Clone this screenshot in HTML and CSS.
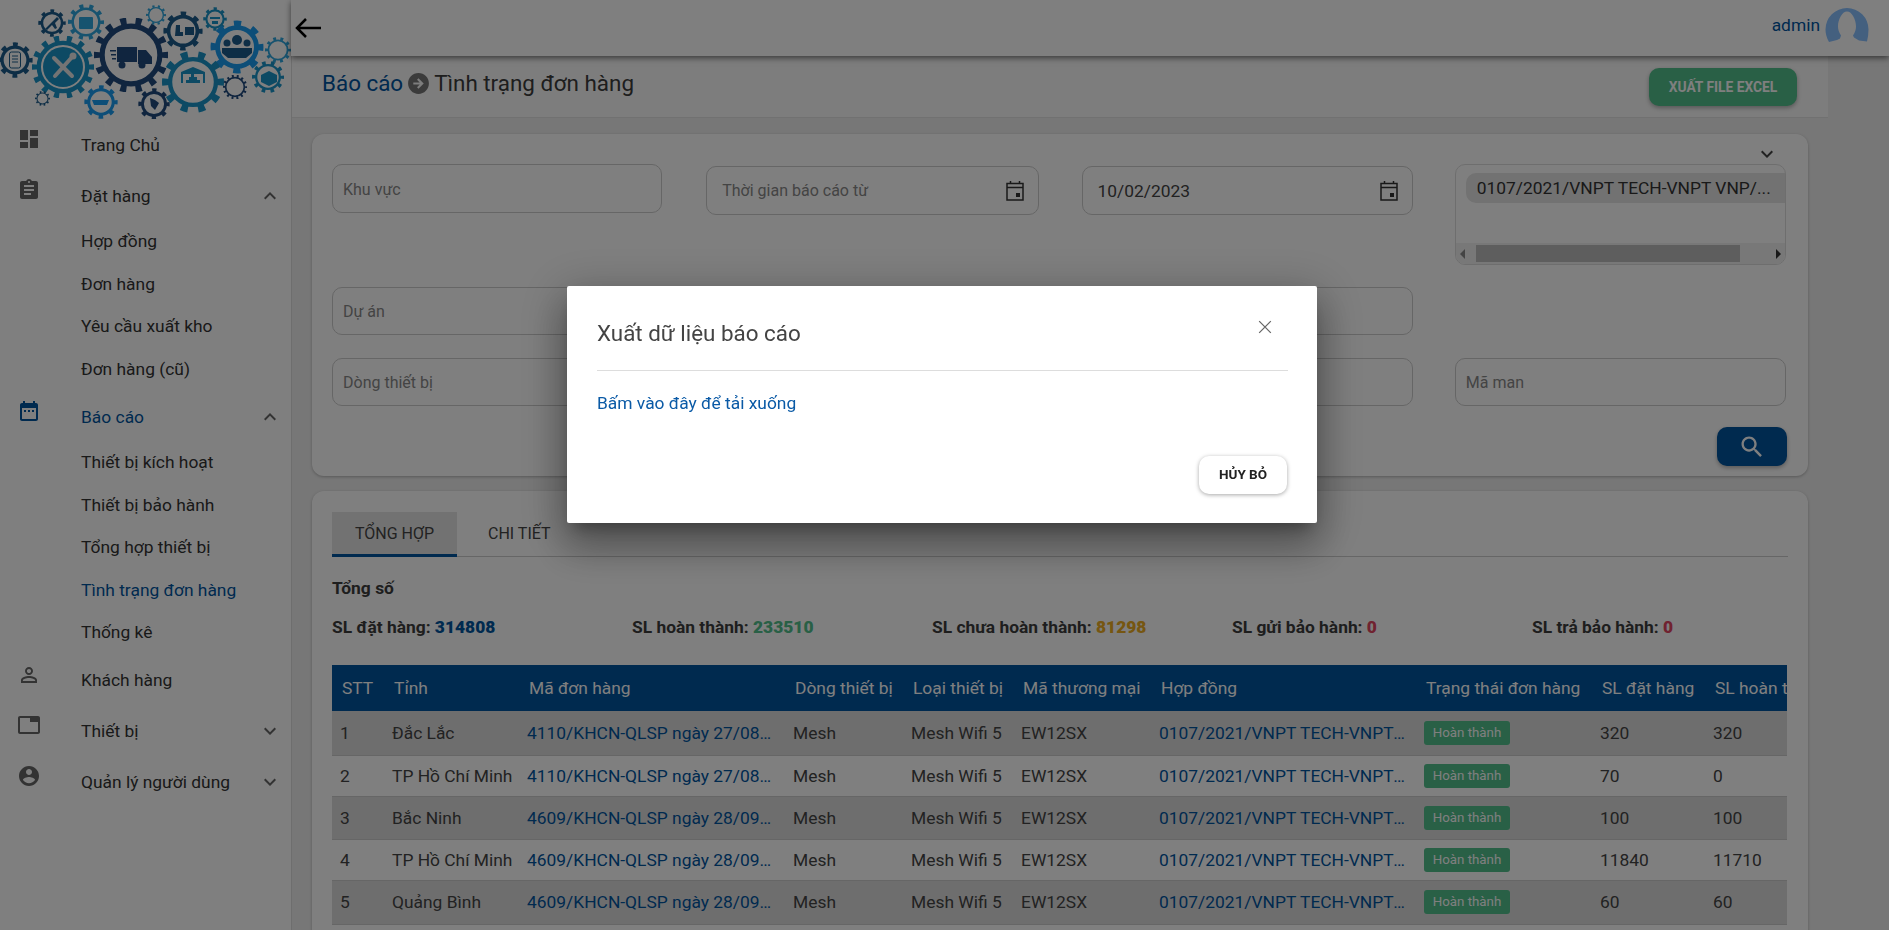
FILE: index.html
```html
<!DOCTYPE html>
<html lang="vi">
<head>
<meta charset="utf-8">
<title>Tình trạng đơn hàng</title>
<link rel="stylesheet" href="styles.css">
</head>
<body>
<svg class="defs" width="0" height="0" aria-hidden="true">
  <symbol id="gear8" viewBox="-50 -50 100 100"><circle r="43" class="teeth" pathLength="16"/><circle r="36" class="ring"/></symbol>
  <symbol id="gear10" viewBox="-50 -50 100 100"><circle r="44" class="teeth" pathLength="20"/><circle r="37" class="ring thin"/></symbol>
  <symbol id="gear14" viewBox="-50 -50 100 100"><circle r="45" class="teeth" pathLength="28"/><circle r="39" class="ring thin"/></symbol>
</svg>
<div class="app">
  <aside class="sidebar">
    <div class="logo">
      <svg class="logo-art" viewBox="0 0 291 120" width="291" height="120" aria-hidden="true">
        <g class="navy2"><use href="#gear8" x="-3" y="42" width="36" height="36"/><rect x="9.500" y="52" width="11" height="16" rx="2" class="line"/><path d="M12 56h6M12 59h6M12 62h6" class="line"/></g>
        <g class="teal"><use href="#gear14" x="32" y="36" width="62" height="62"/><circle cx="63" cy="67" r="20" class="fill"/><path d="M73 56L55 76M54 58l18 18" class="cross"/><circle cx="73" cy="56" r="3.500" class="knock"/></g>
        <g class="navy2"><use href="#gear8" x="38" y="9" width="28" height="28"/><path d="M45 29l12-12 2 2-4 4 2 5-2 1-3-4-5 5z" class="fill"/></g>
        <g class="mid"><use href="#gear10" x="68" y="4" width="36" height="36"/><rect x="79" y="17" width="14" height="12" rx="1" class="fill"/></g>
        <g class="navy"><use href="#gear14" x="94" y="18" width="74" height="74"/><path d="M117 47h20v15h-20zM138 50h8l6 7v7h-14zM110 50h6v1.500h-6zM111 54h5v1.500h-5zM112 58h4v1.500h-4z" class="fill"/><circle cx="122" cy="65" r="3.500" class="fill"/><circle cx="142" cy="65" r="3.500" class="fill"/></g>
        <g class="mid"><use href="#gear10" x="146" y="5" width="20" height="20"/></g>
        <g class="navy2"><use href="#gear8" x="163" y="11" width="40" height="40"/><path d="M176 25h4v7h3v4h-8zM185 27h9v8h-9z" class="fill"/></g>
        <g class="teal"><use href="#gear8" x="203" y="7" width="24" height="24"/><path d="M210 17h10v2h-10zM212 21h6v3h-6z" class="fill"/></g>
        <g class="blue"><use href="#gear8" x="210" y="20" width="54" height="54"/></g>
        <g class="navy2"><circle cx="237" cy="40" r="5" class="fill"/><circle cx="227" cy="43" r="3.500" class="fill"/><circle cx="247" cy="43" r="3.500" class="fill"/><path d="M222 48h30v5l-6 5h-18l-6-5z" class="fill"/></g>
        <g class="mid"><use href="#gear10" x="265" y="37" width="26" height="26"/></g>
        <g class="teal"><use href="#gear10" x="162" y="51" width="62" height="62"/><path d="M181 83V72l12-5 12 5v11h-2V74h-20v9zM186 83h14v-3h-3v-3h-3v-3h-3v3h-2v3h-3z" class="fill"/></g>
        <g class="navy"><use href="#gear14" x="223" y="75" width="24" height="24"/></g>
        <g class="teal"><use href="#gear10" x="252" y="61" width="32" height="32"/><path d="M261 75l8-4 8 4v7l-8 4-8-4z" class="fill"/></g>
        <g class="blue"><use href="#gear8" x="84" y="85" width="34" height="34"/><path d="M92 100h17l-2 5H94z" class="fill"/></g>
        <g class="navy"><use href="#gear8" x="138" y="88" width="32" height="32"/><path d="M150 98l5 2 4 3-4 7-4-4z" class="fill"/></g>
        <g class="navy2"><use href="#gear10" x="35" y="91" width="15" height="15"/></g>
      </svg>
    </div>
    <nav class="nav">
      <a class="item"><svg class="ico" viewBox="0 0 24 24"><path d="M3 13h8V3H3v10zm0 8h8v-6H3v6zm10 0h8V11h-8v10zm0-18v6h8V3h-8z"/></svg><span class="label">Trang Chủ</span></a>
      <a class="item"><svg class="ico" viewBox="0 0 24 24"><path d="M19 3h-4.180C14.400 1.840 13.300 1 12 1c-1.300 0-2.400.840-2.820 2H5c-1.100 0-2 .900-2 2v14c0 1.100.900 2 2 2h14c1.100 0 2-.900 2-2V5c0-1.100-.900-2-2-2zm-7 0c.550 0 1 .450 1 1s-.450 1-1 1-1-.450-1-1 .450-1 1-1zm2 14H7v-2h7v2zm3-4H7v-2h10v2zm0-4H7V7h10v2z"/></svg><span class="label">Đặt hàng</span><svg class="chev" viewBox="0 0 24 24"><path d="M12 8l-6 6 1.410 1.410L12 10.830l4.590 4.580L18 14z"/></svg></a>
      <a class="sub">Hợp đồng</a>
      <a class="sub">Đơn hàng</a>
      <a class="sub">Yêu cầu xuất kho</a>
      <a class="sub">Đơn hàng (cũ)</a>
      <a class="item active"><svg class="ico" viewBox="0 0 24 24"><path d="M9 11H7v2h2v-2zm4 0h-2v2h2v-2zm4 0h-2v2h2v-2zm2-7h-1V2h-2v2H8V2H6v2H5c-1.110 0-1.990.900-1.990 2L3 20c0 1.100.890 2 2 2h14c1.100 0 2-.900 2-2V6c0-1.100-.900-2-2-2zm0 16H5V9h14v11z"/></svg><span class="label">Báo cáo</span><svg class="chev" viewBox="0 0 24 24"><path d="M12 8l-6 6 1.410 1.410L12 10.830l4.590 4.580L18 14z"/></svg></a>
      <a class="sub">Thiết bị kích hoạt</a>
      <a class="sub">Thiết bị bảo hành</a>
      <a class="sub">Tổng hợp thiết bị</a>
      <a class="sub current">Tình trạng đơn hàng</a>
      <a class="sub">Thống kê</a>
      <a class="item"><svg class="ico low" viewBox="0 0 24 24"><path d="M12 5.900c1.160 0 2.100.940 2.100 2.100s-.940 2.100-2.100 2.100S9.900 9.160 9.900 8s.940-2.100 2.100-2.100m0 9c2.970 0 6.100 1.460 6.100 2.100v1.100H5.900V17c0-.640 3.130-2.100 6.100-2.100M12 4C9.790 4 8 5.790 8 8s1.790 4 4 4 4-1.790 4-4-1.790-4-4-4zm0 9c-2.670 0-8 1.340-8 4v3h16v-3c0-2.660-5.330-4-8-4z"/></svg><span class="label">Khách hàng</span></a>
      <a class="item"><svg class="ico" viewBox="0 0 24 24"><path d="M21 3H3c-1.100 0-2 .900-2 2v14c0 1.100.900 2 2 2h18c1.100 0 2-.900 2-2V5c0-1.100-.900-2-2-2zm0 16H3V5h10v4h8v10z"/></svg><span class="label">Thiết bị</span><svg class="chev" viewBox="0 0 24 24"><path d="M16.590 8.590L12 13.170 7.410 8.590 6 10l6 6 6-6z"/></svg></a>
      <a class="item"><svg class="ico" viewBox="0 0 24 24"><path d="M12 2C6.480 2 2 6.480 2 12s4.480 10 10 10 10-4.480 10-10S17.520 2 12 2zm0 3c1.660 0 3 1.340 3 3s-1.340 3-3 3-3-1.340-3-3 1.340-3 3-3zm0 14.200c-2.500 0-4.710-1.280-6-3.220.030-1.990 4-3.080 6-3.080 1.990 0 5.970 1.090 6 3.080-1.290 1.940-3.500 3.220-6 3.220z"/></svg><span class="label">Quản lý người dùng</span><svg class="chev" viewBox="0 0 24 24"><path d="M16.590 8.590L12 13.170 7.410 8.590 6 10l6 6 6-6z"/></svg></a>
    </nav>
  </aside>

  <main class="main">
    <header class="topbar">
      <svg class="back" viewBox="0 0 28 22"><path d="M27 11H3M12 2l-9 9 9 9"/></svg>
      <div class="user"><span class="user-name">admin</span>
        <svg class="avatar" viewBox="0 0 44 34"><path d="M22 0a21.500 21.500 0 0 1 21.500 21.500c0 4-.500 8-1.500 12l-8-1-5-3-1-2c2-3 3-6 3-9 0-7-4-15-9-15s-9 8-9 15c0 3 1 6 3 9l-1 3-3 1.500-8 2C1.500 29.500.500 25.500.500 21.500A21.500 21.500 0 0 1 22 0z"/></svg>
      </div>
    </header>

    <section class="crumbbar">
      <h1 class="crumb"><span class="crumb-link">Báo cáo</span>
        <svg class="crumb-ico" viewBox="0 0 24 24"><path d="M12 2C6.480 2 2 6.480 2 12s4.480 10 10 10 10-4.480 10-10S17.520 2 12 2zm0 15l-1.410-1.410L13.170 13H7v-2h6.170l-2.580-2.590L12 7l5 5-5 5z"/></svg>
        <span>Tình trạng đơn hàng</span></h1>
      <button class="btn-excel">Xuất file Excel</button>
    </section>

    <section class="card filters">
      <div class="collapse"><svg class="chev-top" viewBox="0 0 24 24"><path d="M16.590 8.590L12 13.170 7.410 8.590 6 10l6 6 6-6z"/></svg></div>
      <div class="filter-grid">
        <div class="field narrow">Khu vực</div>
        <div class="field date">Thời gian báo cáo từ<svg class="cal" viewBox="0 0 24 24"><path d="M4 4.500h16v16.500H4zM4 8.500h16M7.500 2v3M16.500 2v3" class="cal-line"/><path d="M13 14h4v4h-4z"/></svg></div>
        <div class="field date value">10/02/2023<svg class="cal" viewBox="0 0 24 24"><path d="M4 4.500h16v16.500H4zM4 8.500h16M7.500 2v3M16.500 2v3" class="cal-line"/><path d="M13 14h4v4h-4z"/></svg></div>
        <div class="multi last">
          <div class="chip-wrap"><span class="chip">0107/2021/VNPT TECH-VNPT VNP/...</span></div>
          <div class="scroll"><span class="arr-l"></span><span class="thumb"></span><span class="arr-r"></span></div>
        </div>
        <div class="field">Dự án</div>
        <div class="field"></div>
        <div class="field"></div>
        <div></div>
        <div class="field">Dòng thiết bị</div>
        <div class="field"></div>
        <div class="field"></div>
        <div class="field last">Mã man</div>
      </div>
      <div class="search-row"><button class="btn-search"><svg viewBox="0 0 24 24"><path d="M15.500 14h-.790l-.280-.270C15.410 12.590 16 11.110 16 9.500 16 5.910 13.090 3 9.500 3S3 5.910 3 9.500 5.910 16 9.500 16c1.610 0 3.090-.590 4.230-1.570l.270.280v.790l5 4.990L20.490 19l-4.990-5zm-6 0C7.010 14 5 11.990 5 9.500S7.010 5 9.500 5 14 7.010 14 9.500 11.990 14 9.500 14z"/></svg></button></div>
    </section>

    <section class="card results">
      <div class="tabs"><span class="tab on">Tổng hợp</span><span class="tab">Chi tiết</span></div>
      <div class="total">Tổng số</div>
      <div class="stats">
        <div>SL đặt hàng: <b class="c-navy">314808</b></div>
        <div>SL hoàn thành: <b class="c-green">233510</b></div>
        <div>SL chưa hoàn thành: <b class="c-orange">81298</b></div>
        <div>SL gửi bảo hành: <b class="c-red">0</b></div>
        <div>SL trả bảo hành: <b class="c-red">0</b></div>
      </div>
      <div class="table-wrap">
        <table class="grid">
          <thead><tr>
            <th class="w1">STT</th><th class="w2">Tỉnh</th><th class="w3">Mã đơn hàng</th><th class="w4">Dòng thiết bị</th><th class="w5">Loại thiết bị</th><th class="w6">Mã thương mại</th><th class="w7">Hợp đồng</th><th class="w8">Trạng thái đơn hàng</th><th class="w9">SL đặt hàng</th><th class="w10">SL hoàn thành</th>
          </tr></thead>
          <tbody>
            <tr class="r1"><td>1</td><td>Đắc Lắc</td><td class="lnk">4110/KHCN-QLSP ngày 27/08/2021</td><td>Mesh</td><td>Mesh Wifi 5</td><td>EW12SX</td><td class="lnk">0107/2021/VNPT TECH-VNPT VNP/2021</td><td><span class="badge">Hoàn thành</span></td><td>320</td><td>320</td></tr>
            <tr class="r2"><td>2</td><td>TP Hồ Chí Minh</td><td class="lnk">4110/KHCN-QLSP ngày 27/08/2021</td><td>Mesh</td><td>Mesh Wifi 5</td><td>EW12SX</td><td class="lnk">0107/2021/VNPT TECH-VNPT VNP/2021</td><td><span class="badge">Hoàn thành</span></td><td>70</td><td>0</td></tr>
            <tr class="r3"><td>3</td><td>Bắc Ninh</td><td class="lnk">4609/KHCN-QLSP ngày 28/09/2021</td><td>Mesh</td><td>Mesh Wifi 5</td><td>EW12SX</td><td class="lnk">0107/2021/VNPT TECH-VNPT VNP/2021</td><td><span class="badge">Hoàn thành</span></td><td>100</td><td>100</td></tr>
            <tr class="r2"><td>4</td><td>TP Hồ Chí Minh</td><td class="lnk">4609/KHCN-QLSP ngày 28/09/2021</td><td>Mesh</td><td>Mesh Wifi 5</td><td>EW12SX</td><td class="lnk">0107/2021/VNPT TECH-VNPT VNP/2021</td><td><span class="badge">Hoàn thành</span></td><td>11840</td><td>11710</td></tr>
            <tr class="r5"><td>5</td><td>Quảng Bình</td><td class="lnk">4609/KHCN-QLSP ngày 28/09/2021</td><td>Mesh</td><td>Mesh Wifi 5</td><td>EW12SX</td><td class="lnk">0107/2021/VNPT TECH-VNPT VNP/2021</td><td><span class="badge">Hoàn thành</span></td><td>60</td><td>60</td></tr>
          </tbody>
        </table>
      </div>
    </section>
  </main>
</div>

<div class="overlay"></div>
<div class="dialog">
  <div class="dlg-head"><h2 class="dlg-title">Xuất dữ liệu báo cáo</h2>
    <svg class="dlg-close" viewBox="0 0 24 24"><path d="M5 5l14 14M19 5L5 19"/></svg>
  </div>
  <a class="dlg-link">Bấm vào đây để tải xuống</a>
  <div class="dlg-foot"><button class="btn-cancel">Hủy bỏ</button></div>
</div>
</body>
</html>
```

FILE: styles.css
```css
* { box-sizing: border-box; }
html, body { margin: 0; height: 100%; overflow: hidden; }
body { font-family: Roboto, "Noto Sans", sans-serif; font-size: 17.400px; color: #3c3c3c; background: #eee; }
.defs { position: absolute; }

.app { display: flex; height: 930px; width: 1889px; overflow: hidden; }

/* sidebar */
.sidebar { width: 292px; flex: none; background: #fff; border-right: 1px solid #ddd; height: 100%; }
.logo { height: 119px; overflow: hidden; }
.logo-art { display: block; }
.teeth { fill: none; stroke: currentColor; stroke-width: 12; stroke-dasharray: .8 1.200; stroke-dashoffset: .4; }
.ring { fill: none; stroke: currentColor; stroke-width: 9; }
.ring.thin { stroke-width: 7; }
.fill { fill: currentColor; }
.line { fill: none; stroke: currentColor; stroke-width: 1; }
.cross { fill: none; stroke: #e8e8e8; stroke-width: 4; stroke-linecap: round; }
.knock { fill: #e8e8e8; }
.navy { color: #204a7e; }
.navy2 { color: #1c5c8c; }
.teal { color: #1a94c8; }
.mid { color: #2fa6de; }
.blue { color: #1a9cf0; }

.nav { display: flex; flex-direction: column; }
.item { display: flex; align-items: center; height: 51px; padding-left: 17px; color: #333; }
.item.active { color: #00549f; }
.item.active .ico { fill: #00549f; }
.ico { width: 24px; height: 24px; fill: #666; flex: none; margin-right: 40px; position: relative; top: -6px; }
.ico.low { top: -5px; }
.label { flex: 1; }
.chev { width: 24px; height: 24px; fill: #666; margin-right: 9px; flex: none; }
.sub { display: flex; align-items: center; height: 42.500px; padding-left: 81px; color: #333; }
.sub.current { color: #00549f; }
.item + .sub { margin-top: -1px; }
.sub + .item { margin-top: 1px; }

/* main */
.main { flex: 1; min-width: 0; display: flex; flex-direction: column; }
.topbar { height: 56px; flex: none; background: #fff; display: flex; align-items: center; justify-content: space-between; padding: 0 20px 6px 3px; box-shadow: 0 2px 6px rgba(0,0,0,.55); position: relative; z-index: 2; margin-left: -1px; }
.back { width: 28px; height: 22px; fill: none; stroke: #000; stroke-width: 2.500; margin-top: 5px; }
.user { display: flex; align-items: center; gap: 5px; }
.user-name { color: #00549f; }
.avatar { width: 44px; height: 34px; fill: #88c0ff; }

.crumbbar { height: 62px; flex: none; width: 1536px; background: #fafafa; border-bottom: 1px solid #e2e2e2; display: flex; align-items: center; justify-content: space-between; padding: 0 31px 0 30px; }
.crumb { margin: 0 0 7px; font-size: 22.400px; font-weight: 400; display: flex; align-items: center; gap: 3px; color: #3c3c3c; }
.crumb-link { color: #00549f; }
.crumb-ico { width: 25px; height: 25px; fill: #777; }
.btn-excel { width: 148px; height: 38px; border: 0; border-radius: 10px; background: #52c08c; color: #fff; font: 700 13.800px Roboto, sans-serif; text-transform: uppercase; box-shadow: 0 2px 4px rgba(0,0,0,.3); }

.card { width: 1496px; margin-left: 20px; background: #fff; border-radius: 12px; box-shadow: 0 1px 3px rgba(0,0,0,.25); padding: 0 20px; flex: none; }
.filters { margin-top: 16px; height: 342px; padding-top: 8px; }
.collapse { height: 22px; display: flex; justify-content: flex-end; padding-right: 9px; }
.chev-top { width: 24px; height: 24px; fill: #444; }
.filter-grid { display: grid; grid-template-columns: repeat(4, 1fr); column-gap: 42px; row-gap: 22px; grid-template-rows: 101px 49px 48px; width: 1455px; }
.field { height: 48px; border: 1px solid #ccc; border-radius: 10px; display: flex; align-items: center; padding: 0 10px; color: #888; font-size: 16px; position: relative; }
.field.narrow { margin-right: 2px; height: 49px; padding-top: 2px; }
.field.date { height: 49px; margin-top: 2px; padding: 0 15px; justify-content: space-between; }
.field.value { color: #444; font-size: 17.400px; margin-left: 1px; }
.last { margin-right: 1px; }
.cal { width: 24px; height: 24px; fill: #333; margin-right: -4px; flex: none; }
.cal-line { fill: none; stroke: #333; stroke-width: 1.500; }
.multi { border: 1px solid #ddd; border-radius: 10px; height: 101px; overflow: hidden; display: flex; flex-direction: column; justify-content: space-between; }
.chip-wrap { padding: 8px 0 0 10px; overflow: hidden; }
.chip { display: block; height: 30px; line-height: 30px; padding-left: 11px; background: #e4e4e4; border-radius: 10px 0 0 10px; white-space: nowrap; color: #333; }
.scroll { height: 21px; background: #f1f1f1; display: flex; align-items: center; padding: 0 0 0 20px; position: relative; }
.thumb { width: 264px; height: 17px; background: #bdbdbd; }
.arr-l, .arr-r { position: absolute; top: 6px; width: 0; height: 0; border: 5px solid transparent; }
.arr-l { left: 4px; border-left: 0; border-right-color: #888; }
.arr-r { right: 4px; border-right: 0; border-left-color: #333; }
.search-row { display: flex; justify-content: flex-end; margin-top: 21px; padding-right: 1px; }
.btn-search { width: 70px; height: 39px; border: 0; border-radius: 10px; background: #00549f; display: flex; align-items: center; justify-content: center; box-shadow: 0 2px 4px rgba(0,0,0,.3); }
.btn-search svg { width: 28px; height: 28px; fill: #fff; }

.results { margin-top: 15px; padding-top: 21px; height: 500px; }
.tabs { display: flex; border-bottom: 1px solid #ccc; height: 45px; }
.tab { width: 125px; text-align: center; line-height: 44px; text-transform: uppercase; color: #444; height: 45px; flex: none; font-size: 16px; }
.tab + .tab { width: auto; padding: 0 31px; }
.tab.on { background: #e4e4e4; border-bottom: 3px solid #00549f; }
.total { font-weight: 700; margin-top: 21px; line-height: 20px; }
.stats { display: grid; grid-template-columns: repeat(5, 300px); margin-top: 19px; line-height: 20px; font-weight: 700; white-space: nowrap; }
.c-navy { color: #00549f; }
.c-green { color: #52c08c; }
.c-orange { color: #ecac22; }
.c-red { color: #e04560; }

.table-wrap { margin-top: 28px; overflow: hidden; width: 1455px; }
.grid { border-collapse: collapse; table-layout: fixed; width: 1523px; }
.grid th { height: 46px; background: #00549f; color: #fff; font-weight: 400; text-align: left; padding: 0 0 0 10px; white-space: nowrap; overflow: hidden; }
.w1 { width: 52px; } .w2 { width: 135px; } .w3 { width: 266px; } .w4 { width: 118px; } .w5 { width: 110px; }
.w6 { width: 138px; } .w7 { width: 265px; } .w8 { width: 176px; } .w9 { width: 113px; } .w10 { width: 150px; }
.grid td { padding: 0 2px 0 8px; border-bottom: 1px solid #ccc; white-space: nowrap; overflow: hidden; text-overflow: ellipsis; color: #444; }
.r1 td { height: 44px; }
.r2 td { height: 41.500px; }
.r3 td { height: 42.500px; }
.r5 td { height: 43.500px; }
.grid tbody tr:nth-child(odd) td { background: #ddd; }
.grid td.lnk { color: #00549f; padding-right: 8px; }
.badge { display: inline-block; height: 24px; line-height: 24px; width: 86px; text-align: center; border-radius: 3px; background: #52c08c; color: #fff; font-size: 13.300px; }

/* dialog */
.overlay { position: fixed; inset: 0; background: rgba(0,0,0,.5); z-index: 10; }
.dialog { position: fixed; left: 567px; top: 286px; width: 750px; height: 237px; background: #fff; border-radius: 2px; padding: 0 29px 0 30px; z-index: 11; box-shadow: 0 11px 15px -7px rgba(0,0,0,.3), 0 24px 38px 3px rgba(0,0,0,.24), 0 9px 46px 8px rgba(0,0,0,.2); }
.dlg-head { height: 85px; border-bottom: 1px solid #ddd; display: flex; justify-content: space-between; align-items: center; }
.dlg-title { margin: 10px 0 0; font-size: 22.400px; font-weight: 400; color: #444; }
.dlg-close { width: 20px; height: 20px; fill: none; stroke: #666; stroke-width: 1.500; margin: -2px 13px 0 0; }
.dlg-link { display: block; margin-top: 21px; color: #0a5aa6; line-height: 22px; }
.dlg-foot { display: flex; justify-content: flex-end; margin-top: 42px; padding-right: 1px; }
.btn-cancel { width: 88px; height: 38px; padding: 0 0 3px; border: 0; border-radius: 10px; background: #fff; color: #222; font: 700 13.500px Roboto, sans-serif; text-transform: uppercase; box-shadow: 0 1px 4px rgba(0,0,0,.35); }
```
